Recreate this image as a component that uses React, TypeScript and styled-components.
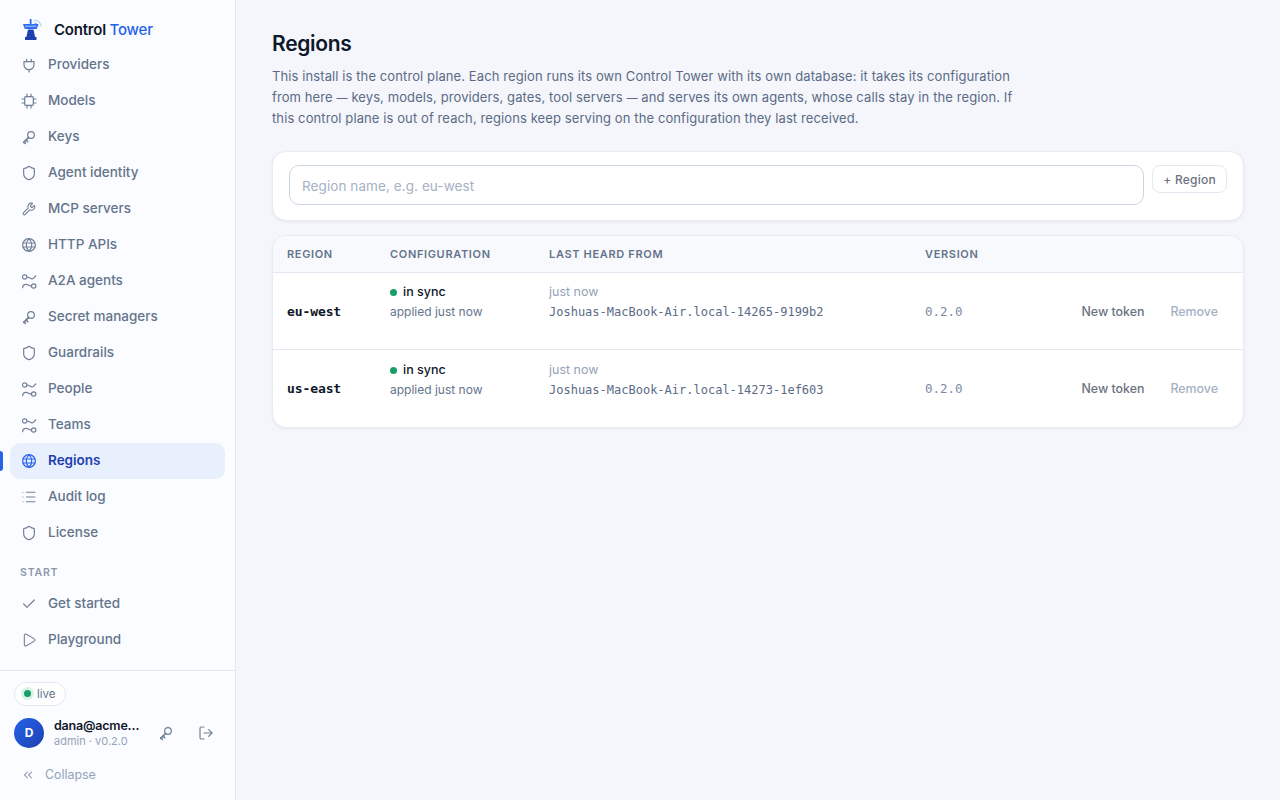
import React from "react";
import styled, { createGlobalStyle } from "styled-components";
import { ChevronsLeft, List, LogOut, Play, Check, Shield, Wrench } from "lucide-react";

const Global = createGlobalStyle`
  * { box-sizing: border-box; }
  html, body { margin: 0; height: 100%; }
  body { font-family: Inter, "Liberation Sans", sans-serif; background: #f4f6fb; color: #0f172a; overflow: hidden; }
`;
const Shell = styled.div`display: flex; height: 800px; width: 1280px;`;
const Sidebar = styled.aside`
  width: 236px; flex: none; display: flex; flex-direction: column;
  background: #fbfcff; border-right: 1px solid #e4e8f1;
`;
const Brand = styled.div`
  height: 47px; padding: 12px 0 1px 19px; display: flex; align-items: center; gap: 11px; flex: none;
`;
const BrandName = styled.div`font-size: 15px; font-weight: 600; letter-spacing: -0.2px; color: #0f172a; span { color: #2563eb; font-weight: 500; }`;
const Nav = styled.nav`flex: 1; padding: 0 10px; position: relative;`;
const Item = styled.div<{ $active?: boolean }>`
  height: 36px; display: flex; align-items: center; gap: 11px; padding: 0 0 2px 11px; border-radius: 10px;
  font-size: 13.5px;
  font-weight: ${(p) => (p.$active ? 600 : 500)};
  color: ${(p) => (p.$active ? "#1e40af" : "#64748b")};
  background: ${(p) => (p.$active ? "#e8effd" : "transparent")};
  position: relative;
  svg { flex: none; margin-top: 2px; color: ${(p) => (p.$active ? "#2563eb" : "#718096")}; }
  ${(p) => p.$active && `&::before { content: ""; position: absolute; left: -10px; top: 8px; width: 3px; height: 20px; border-radius: 0 3px 3px 0; background: #2563eb; }`}
`;
const Section = styled.div`
  font-size: 10.5px; font-weight: 600; letter-spacing: 0.8px; color: #8a97ad; padding: 14px 0 0 10px; height: 35px; line-height: 16px;
`;
const SmallWrench = styled(Wrench)`margin: 2px 1px 0;`;
const Footer = styled.div`border-top: 1px solid #e4e8f1; padding: 10px 14px 0; height: 130px; flex: none;`;
const LivePill = styled.div`
  display: inline-flex; align-items: center; gap: 6px; height: 24px; padding: 0 9px;
  border: 1px solid #e4e8f1; border-radius: 12px; font-size: 11.5px; color: #64748b; background: #fff;
`;
const LiveDot = styled.i`width: 7px; height: 7px; border-radius: 50%; background: #16a068; box-shadow: 0 0 0 3px #d9f2e6;`;
const UserRow = styled.div`display: flex; align-items: center; margin-top: 12px; height: 30px;`;
const Avatar = styled.div`
  width: 30px; height: 30px; border-radius: 50%; background: linear-gradient(135deg, #2563eb, #1e40af);
  color: #fff; font-size: 12px; font-weight: 700; display: flex; align-items: center; justify-content: center; flex: none;
`;
const UserText = styled.div`margin-left: 10px; width: 92px; flex: none;`;
const UserName = styled.div`font-size: 12.5px; font-weight: 600; letter-spacing: -0.2px; color: #0f172a; line-height: 16px; white-space: nowrap;`;
const UserRole = styled.div`font-size: 11px; color: #94a3b8; line-height: 14px; white-space: nowrap;`;
const IconBtn = styled.div`width: 40px; flex: none; display: flex; justify-content: center; color: #718096;`;
const Collapse = styled.div`
  display: flex; align-items: center; gap: 10px; margin-top: 17px; padding-left: 7px; height: 20px;
  font-size: 12.4px; color: #94a3b8; svg { color: #94a3b8; }
`;
const Main = styled.main`flex: 1; padding: 30px 36px 0; min-width: 0;`;
const Title = styled.h1`margin: 0; font-size: 21px; line-height: 28px; font-weight: 600; letter-spacing: -0.3px; color: #0f172a;`;
const Intro = styled.p`margin: 8px 0 0; width: 760px; font-size: 13px; line-height: 21px; color: #5b6b85; letter-spacing: 0.1px;`;
const Dash = styled.span`font-size: 11px; line-height: 1;`;
const Card = styled.section`
  background: #fff; border: 1px solid #e8ebf3; border-radius: 14px; box-shadow: 0 1px 3px rgba(15,23,42,.06);
`;
const FormCard = styled(Card)`margin-top: 22px; padding: 13px 16px; display: flex; align-items: flex-start; gap: 8px; height: 70px;`;
const Field = styled.input`
  flex: 1; height: 40px; border: 1px solid #cbd5e1; border-radius: 10px; padding: 1px 12px 0; font: 400 13.5px Inter, sans-serif; letter-spacing: 0.08px; background: #fff; outline: none; min-width: 0;
  &::placeholder { color: #a5b1c4; }
`;
const GhostButton = styled.button`
  height: 28px; padding: 0 10px; border: 1px solid #e4e8f1; border-radius: 8px; background: #fff; color: #6b7280; font: 500 12px Inter, sans-serif; letter-spacing: 0.25px; white-space: nowrap;
`;
const TableCard = styled(Card)`margin-top: 14px; overflow: hidden;`;
const Row = styled.div`
  display: grid; grid-template-columns: 103px 159px 376px 1fr auto; align-items: center; padding: 0 25px 0 14px;
`;
const HeadRow = styled(Row)`height: 37px; padding-bottom: 1px; background: #f8f9fd; border-bottom: 1px solid #e4e8f1;`;
const Head = styled.div`font-size: 11px; font-weight: 600; letter-spacing: 0.66px; color: #64748b;`;
const BodyRow = styled(Row)<{ $last?: boolean }>`
  height: 77px; border-bottom: ${(p) => (p.$last ? "none" : "1px solid #e4e8f1")};
`;
const TopCell = styled.div<{ $last?: boolean }>`align-self: start; padding-top: ${(p) => (p.$last ? 10 : 9)}px;`;
const RegionName = styled.div`font: 700 13px "DejaVu Sans Mono", monospace; letter-spacing: -0.1px; color: #0f172a;`;
const Status = styled.div`display: flex; align-items: center; gap: 6px; font-size: 12.5px; line-height: 20px; color: #0f172a; font-weight: 500;`;
const Dot = styled.i`width: 7px; height: 7px; border-radius: 50%; background: #16a068;`;
const SubText = styled.div`font-size: 12px; line-height: 20px; color: #64748b;`;
const Heard = styled.div`font-size: 12.5px; line-height: 20px; color: #94a3b8;`;
const Instance = styled.div`font: 400 12px/20px "DejaVu Sans Mono", monospace; color: #5b6b85;`;
const Version = styled.div`font: 400 12.5px "DejaVu Sans Mono", monospace; color: #7c8ba3;`;
const Actions = styled.div`display: flex; gap: 26px; font-size: 12.4px; font-weight: 500;`;
const TokenLink = styled.span`color: #6b7280;`;
const RemoveLink = styled.span`color: #a5b1c4;`;

const Icon = ({ children }: { children: React.ReactNode }) => (
  <svg width="16" height="16" viewBox="0 0 24 24" fill="none" stroke="currentColor" strokeWidth="1.8" strokeLinecap="round" strokeLinejoin="round">{children}</svg>
);
const Connector = (
  <Icon>
    <circle cx="5.500" cy="6" r="3.300" />
    <path d="M9 6c2 0 3 1 5 2s3 1.500 4.500 0l3.500-3.500" />
    <circle cx="19" cy="19.500" r="3.300" />
    <path d="M2.500 22c0-3 2-5 5-5 3 0 5 2.500 8 2.500" />
  </Icon>
);
const K = (
  <Icon>
    <circle cx="15" cy="9" r="5" />
    <path d="M11.500 12.500 4 20" strokeWidth="2.400" />
    <path d="M7.500 16.500 10 19M4.500 19.500 6.500 21.500" strokeWidth="2.400" />
  </Icon>
);
const S = <Shield size={16} strokeWidth={1.8} />;
const G = (
  <Icon>
    <circle cx="12" cy="12" r="9.500" />
    <path d="M3 9h18M3 15h18M12 2.500c-5.500 5.500-5.500 13.500 0 19M12 2.500c5.500 5.500 5.500 13.500 0 19" />
  </Icon>
);
const PlugIcon = (
  <Icon>
    <path d="M8.500 3.500v3.500M15.500 3.500v3.500" />
    <path d="M4.500 7h15v4.500a7.500 7.500 0 0 1-15 0z" />
    <path d="M12 19v3.500" />
  </Icon>
);
const Chip = (
  <Icon>
    <rect x="5.500" y="5.500" width="13" height="13" rx="1.500" />
    <path d="M9 1.500v4M15 1.500v4M9 18.500v4M15 18.500v4M1.500 9h4M1.500 15h4M18.500 9h4M18.500 15h4" />
  </Icon>
);

const items: [string, React.ReactNode][] = [
  ["Providers", PlugIcon],
  ["Models", Chip],
  ["Keys", K],
  ["Agent identity", S],
  ["MCP servers", <SmallWrench size={14} strokeWidth={1.9} />],
  ["HTTP APIs", G],
  ["A2A agents", Connector],
  ["Secret managers", K],
  ["Guardrails", S],
  ["People", Connector],
  ["Teams", Connector],
  ["Regions", G],
  ["Audit log", <List size={16} strokeWidth={1.6} />],
  ["License", S],
];

const regions = [
  { name: "eu-west", inst: "Joshuas-MacBook-Air.local-14265-9199b2" },
  { name: "us-east", inst: "Joshuas-MacBook-Air.local-14273-1ef603" },
];

export default function App() {
  return (
    <Shell>
      <Global />
      <Sidebar>
        <Brand>
          <svg width="24" height="24" viewBox="0 0 24 24">
            <path d="M15 3.500a6 6 0 0 1 7 6" fill="none" stroke="#b9cdf8" strokeWidth="1.100" />
            <path d="M15 6a3.500 3.500 0 0 1 4 3.500" fill="none" stroke="#93b4f5" strokeWidth="1.100" />
            <rect x="10.800" y="2" width="1.700" height="5.500" fill="#2563eb" />
            <path d="M4 7h15.500l-1.800 5H5.800z" fill="#2f6bf0" />
            <rect x="6" y="8.600" width="11.500" height="1.300" fill="#93b4f5" />
            <path d="M9 12.500h5.500l1.700 8H7.300z" fill="#1e40af" />
            <rect x="6" y="20" width="11.500" height="3" fill="#1e40af" />
          </svg>
          <BrandName>Control <span>Tower</span></BrandName>
        </Brand>
        <Nav>
          {items.map(([label, icon]) => (
            <Item key={label} $active={label === "Regions"}>{icon}{label}</Item>
          ))}
          <Section>START</Section>
          <Item><Check size={16} strokeWidth={1.8} />Get started</Item>
          <Item><Play size={16} strokeWidth={1.6} />Playground</Item>
        </Nav>
        <Footer>
          <LivePill><LiveDot />live</LivePill>
          <UserRow>
            <Avatar>D</Avatar>
            <UserText>
              <UserName>dana@acme…</UserName>
              <UserRole>admin · v0.2.0</UserRole>
            </UserText>
            <IconBtn>{K}</IconBtn>
            <IconBtn><LogOut size={16} strokeWidth={1.8} /></IconBtn>
          </UserRow>
          <Collapse><ChevronsLeft size={14} />Collapse</Collapse>
        </Footer>
      </Sidebar>
      <Main>
        <Title>Regions</Title>
        <Intro>
          This install is the control plane. Each region runs its own Control Tower with its own database: it takes its configuration from here <Dash>—</Dash> keys, models, providers, gates, tool servers <Dash>—</Dash> and serves its own agents, whose calls stay in the region. If this control plane is out of reach, regions keep serving on the configuration they last received.
        </Intro>
        <FormCard>
          <Field placeholder="Region name, e.g. eu-west" />
          <GhostButton>+ Region</GhostButton>
        </FormCard>
        <TableCard>
          <HeadRow>
            <Head>REGION</Head><Head>CONFIGURATION</Head><Head>LAST HEARD FROM</Head><Head>VERSION</Head><span />
          </HeadRow>
          {regions.map((r, i) => {
            const last = i === regions.length - 1;
            return (
              <BodyRow key={r.name} $last={last}>
                <RegionName>{r.name}</RegionName>
                <TopCell $last={last}>
                  <Status><Dot />in sync</Status>
                  <SubText>applied just now</SubText>
                </TopCell>
                <TopCell $last={last}>
                  <Heard>just now</Heard>
                  <Instance>{r.inst}</Instance>
                </TopCell>
                <Version>0.2.0</Version>
                <Actions><TokenLink>New token</TokenLink><RemoveLink>Remove</RemoveLink></Actions>
              </BodyRow>
            );
          })}
        </TableCard>
      </Main>
    </Shell>
  );
}
